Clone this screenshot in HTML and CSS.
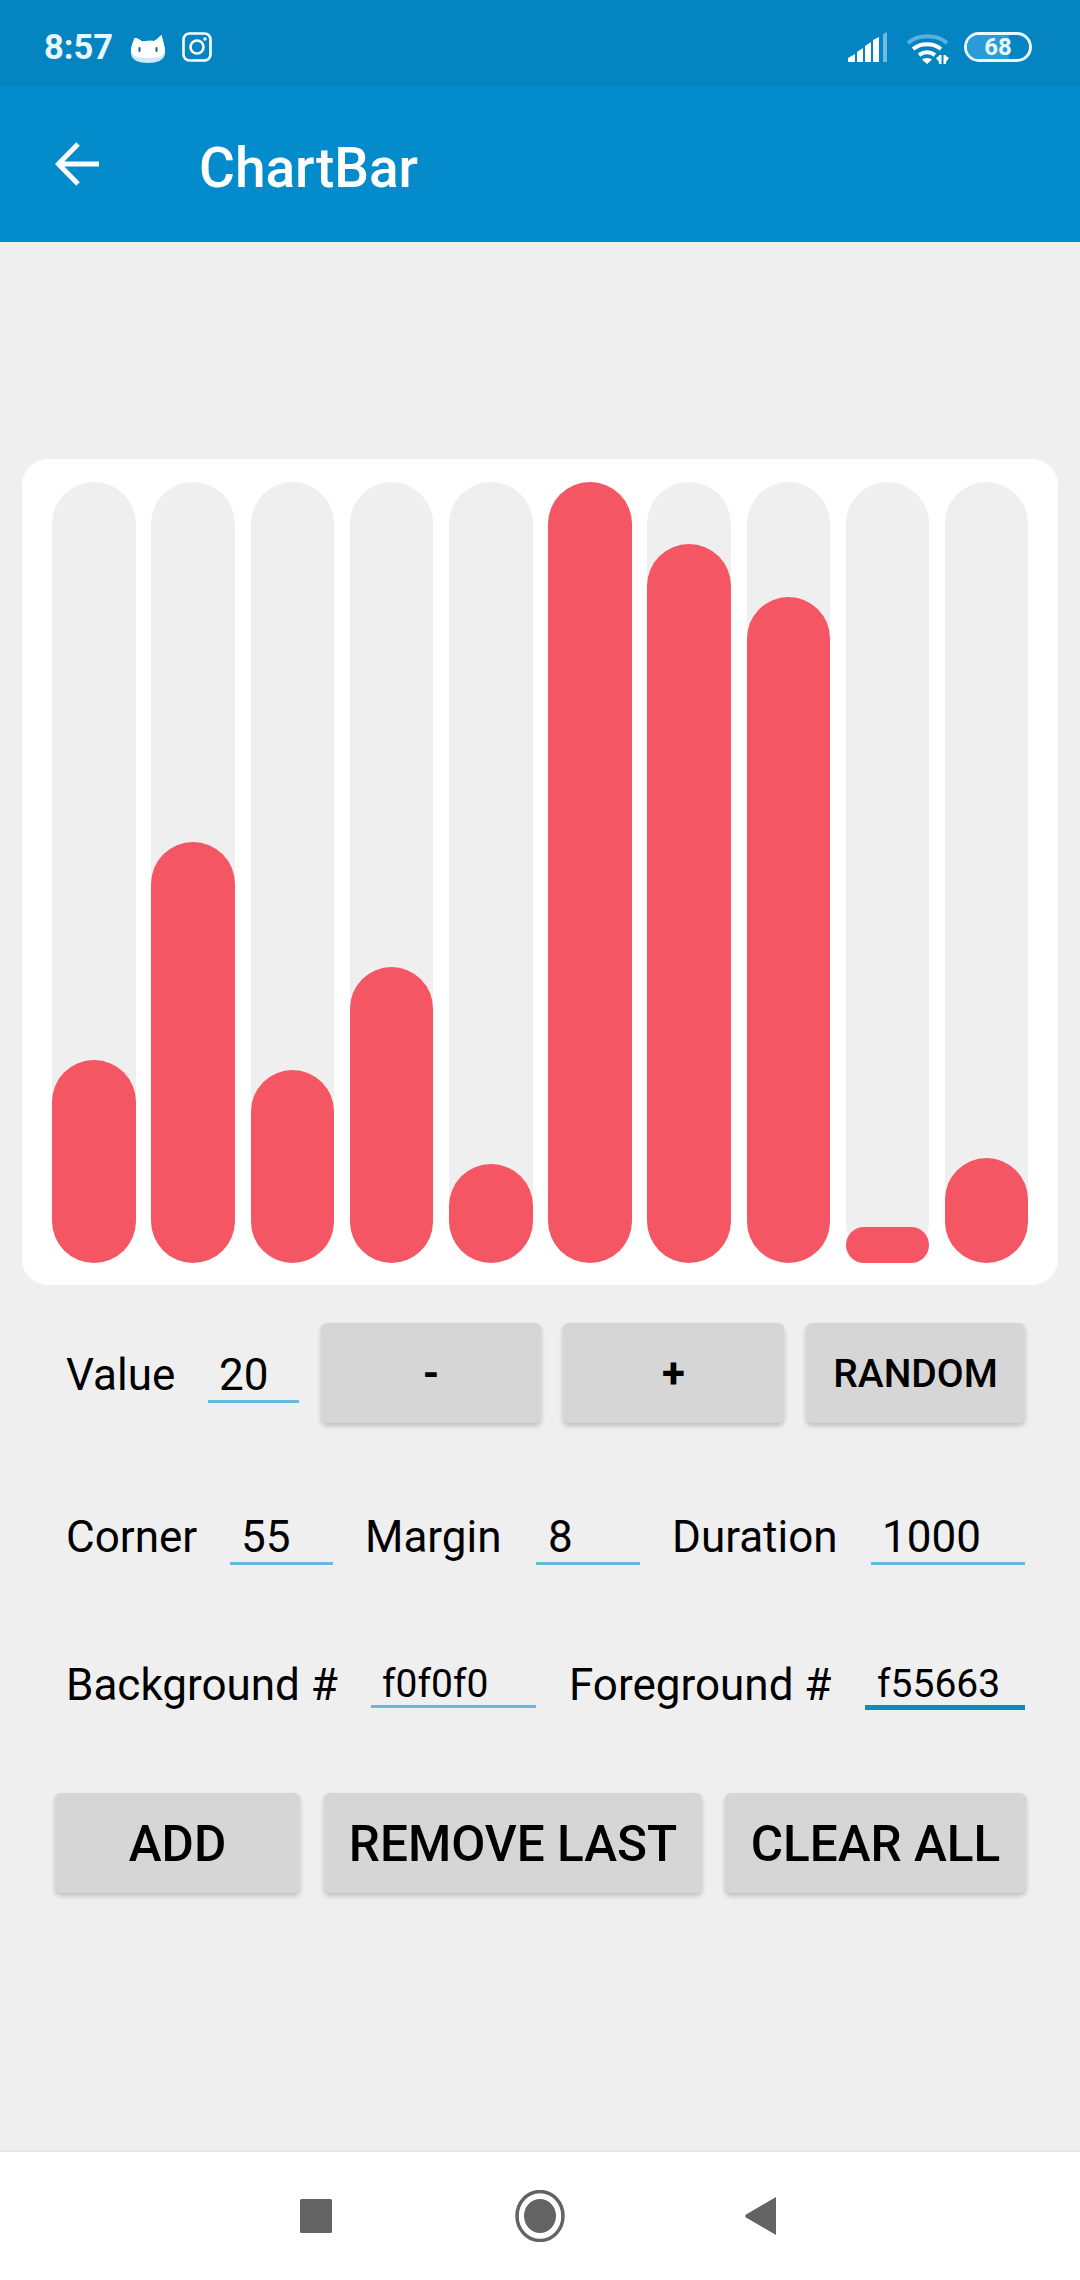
FILE: index.html
```html
<!DOCTYPE html>
<html lang="en">
<head>
<meta charset="utf-8">
<title>ChartBar</title>
<link rel="stylesheet" href="styles.css">
</head>
<body>
<div class="screen">
  <header class="status">
    <div class="status-left">
      <span class="time">8:57</span>
      <svg class="ic-cat" viewBox="0 0 36 30"><path fill="#cfe9f8" d="M1 19C1 12 3 9 4.500 4 8 4 10 6 12 7.500c4-1 8-1 12-.5 3-1.500 5-4 7.500-6C32.500 6 35 12 35 19c0 7-8 10-17 10S1 26 1 19z"/><path fill="#fff" d="M1 17C1 12 3 9 4.500 4 8 4 10 6 12 7.500c4-1 8-1 12-.5 3-1.500 5-4 7.500-6C32.500 6 35 12 35 17c0 5-8 7-17 7S1 22 1 17z"/><rect x="8.500" y="13" width="2" height="5" rx="1" fill="#1a5f85"/><rect x="25.500" y="13" width="2" height="5" rx="1" fill="#1a5f85"/></svg>
      <svg class="ic-insta" viewBox="0 0 30 30"><rect x="1.500" y="1.500" width="27" height="27" rx="6" fill="none" stroke="#fff" stroke-width="2.600"/><circle cx="15" cy="15" r="6.500" fill="none" stroke="#fff" stroke-width="2.600"/><circle cx="23" cy="7" r="1.700" fill="#fff"/></svg>
    </div>
    <div class="status-right">
      <svg class="ic-signal" viewBox="0 0 42 30"><path fill="#fff" d="M0 30v-4l7-4v8zM9 30V20l6-4v14zM17 30V14l6-4v20zM25 30V8l6-3v25z"/><path fill="#6fb9e2" d="M35 30V2l4-2v30z"/></svg>
      <svg class="ic-wifi" viewBox="0 0 44 32"><path fill="none" stroke="#5cb0e0" stroke-width="4" d="M2 11C12 2 31 2 41 11"/><path fill="none" stroke="#fff" stroke-width="4" d="M7 17c8-6.500 20-6.500 28 0"/><path fill="none" stroke="#fff" stroke-width="4" d="M13 23c5-3.500 11-3.500 16 0"/><path fill="#fff" d="M16 27.500c3-2 7-2 10 0L21 32zM33 23h2.500v9H33zM37.500 23H40v9h-2.500z"/><path fill="#fff" d="M30 26l3-2v6zM43 26l-3-2v6z"/></svg>
      <div class="battery"><span class="battery-level"></span><span class="battery-num">68</span></div>
    </div>
  </header>
  <div class="toolbar">
    <svg class="ic-back" viewBox="0 0 44 44"><path fill="none" stroke="#fff" stroke-width="5" d="M44 22H3.500M23 2L3.500 22 23 42"/></svg>
    <h1 class="title">ChartBar</h1>
  </div>
  <main class="content">
    <section class="chart">
      <div class="track"><div class="fill" style="height:26%"></div></div>
      <div class="track"><div class="fill" style="height:53.9%"></div></div>
      <div class="track"><div class="fill" style="height:24.7%"></div></div>
      <div class="track"><div class="fill" style="height:37.9%"></div></div>
      <div class="track"><div class="fill" style="height:12.7%"></div></div>
      <div class="track"><div class="fill" style="height:100%"></div></div>
      <div class="track"><div class="fill" style="height:92%"></div></div>
      <div class="track"><div class="fill" style="height:85.3%"></div></div>
      <div class="track"><div class="fill" style="height:4.6%"></div></div>
      <div class="track"><div class="fill" style="height:13.4%"></div></div>
    </section>

    <div class="row row-value">
      <span class="label lb-value">Value</span>
      <span class="field fd-value">20</span>
      <button class="btn btn-step btn-minus">-</button>
      <button class="btn btn-step">+</button>
      <button class="btn btn-random">RANDOM</button>
    </div>

    <div class="row row-params">
      <span class="label lb-corner">Corner</span>
      <span class="field fd-corner">55</span>
      <span class="label lb-margin">Margin</span>
      <span class="field fd-margin">8</span>
      <span class="label lb-duration">Duration</span>
      <span class="field fd-duration">1000</span>
    </div>

    <div class="row row-colors">
      <span class="label lb-bg">Background #</span>
      <span class="field field-sm fd-bg">f0f0f0</span>
      <span class="label lb-fg">Foreground #</span>
      <span class="field field-sm field-focus fd-fg">f55663</span>
    </div>

    <div class="row row-actions">
      <button class="btn btn-action btn-add">ADD</button>
      <button class="btn btn-action btn-remove">REMOVE LAST</button>
      <button class="btn btn-action btn-clear">CLEAR ALL</button>
    </div>
  </main>
  <nav class="navbar">
    <svg class="ic-nav" viewBox="0 0 32 34"><rect x="0" y="0" width="32" height="34" rx="1.500" fill="#636363"/></svg>
    <svg class="ic-nav-home" viewBox="0 0 50 52"><ellipse cx="25" cy="26" rx="23" ry="24.500" fill="none" stroke="#636363" stroke-width="3.500"/><ellipse cx="25" cy="26" rx="16" ry="17" fill="#636363"/></svg>
    <svg class="ic-nav-back" viewBox="0 0 31 38"><path fill="#636363" d="M31 0v38L1 20.500q-1.500-1.500 0-3z"/></svg>
  </nav>
</div>
</body>
</html>
```

FILE: styles.css
```css
* { box-sizing: border-box; }
html, body { margin: 0; padding: 0; }
body { font-family: Roboto, "Liberation Sans", sans-serif; color: #000; background: #efefef; }
.screen { width: 1080px; height: 2280px; display: flex; flex-direction: column; overflow: hidden; }

/* Status bar */
.status { height: 86px; flex: none; background: #0484c1; display: flex; justify-content: space-between; align-items: flex-start; padding: 32px 48px 0 44px; }
.status-left, .status-right { display: flex; align-items: flex-start; }
.time { font-size: 34.500px; font-weight: 700; line-height: 30px; color: #e8f6fd; width: 86px; }
.ic-cat { width: 36px; height: 30px; margin-top: 2px; }
.ic-insta { width: 30px; height: 30px; margin-left: 16px; }
.ic-signal { width: 42px; height: 30px; }
.ic-wifi { width: 44px; height: 32px; margin-left: 16px; }
.battery { position: relative; width: 68px; height: 30px; margin-left: 14px; border: 3px solid #eaf7fd; border-radius: 15px; overflow: hidden; display: flex; align-items: center; justify-content: center; }
.battery-level { position: absolute; left: 0; top: 0; bottom: 0; width: 68%; background: #2a9bd8; }
.battery-num { position: relative; font-size: 24px; font-weight: 700; color: #eaf7fd; line-height: 24px; }

/* Toolbar */
.toolbar { height: 156px; flex: none; background: #038bcb; display: flex; align-items: center; padding-left: 55px; }
.ic-back { width: 44px; height: 44px; }
.title { margin: 0 0 0 100px; padding-top: 8px; font-size: 55px; font-weight: 500; color: #fff; line-height: 60px; }

/* Content */
.content { flex: 1; background: #efefef; display: flex; flex-direction: column; }
.chart { margin: 217px 22px 0; height: 826px; padding: 23px 29.500px 22px 30.200px; background: #fff; border-radius: 26px; display: flex; gap: 15.600px; }
.track { flex: 1; background: #efefef; border-radius: 42px; display: flex; align-items: flex-end; }
.fill { width: 100%; background: #f55663; border-radius: 42px; }

.row { display: flex; }
.label { font-size: 44px; line-height: 50px; padding-bottom: 3px; flex: none; }
.field { font-size: 44px; line-height: 50px; flex: none; border-bottom: 3px solid #67b9de; }
.field-sm { font-size: 39px; line-height: 42px; }
.field-focus { border-bottom: 5px solid #0f8abb; }

.btn { font-family: inherit; color: #000; border: 0; padding: 0; background: #d6d6d6; border-radius: 6px; box-shadow: 0 3px 5px rgba(0, 0, 0, .2); font-weight: 500; flex: none; }

.row-value { margin-top: 38px; height: 100px; padding-left: 66px; align-items: center; }
.row-value .label, .row-value .field { margin-top: 7px; }
.lb-value { width: 142px; }
.fd-value { width: 91px; padding-left: 11px; margin-right: 22px; }
.btn-step { width: 221px; height: 100px; margin-right: 22px; font-size: 42px; font-weight: 700; }
.btn-minus { width: 220px; }
.btn-random { width: 219px; height: 100px; padding-top: 2px; font-size: 39px; }

.row-params { margin-top: 89px; padding-left: 66px; }
.lb-corner { width: 164px; }
.fd-corner { width: 103px; padding-left: 11px; margin-right: 32px; }
.lb-margin { width: 171px; }
.fd-margin { width: 104px; padding-left: 12px; margin-right: 32px; }
.lb-duration { width: 199px; }
.fd-duration { width: 154px; padding-left: 11px; }

.row-colors { margin-top: 95px; padding-left: 66px; align-items: flex-start; }
.row-colors .field { margin-top: 3px; }
.lb-bg { width: 305px; }
.fd-bg { width: 165px; padding-left: 11px; margin-right: 33px; }
.lb-fg { width: 296px; }
.fd-fg { width: 160px; padding-left: 12px; }

.row-actions { margin-top: 80px; padding-left: 55px; }
.btn-action { height: 100px; padding-top: 2px; font-size: 49.500px; }
.btn-add { width: 245px; margin-right: 24px; }
.btn-remove { width: 378px; margin-right: 23px; }
.btn-clear { width: 301px; }

/* Navigation bar */
.navbar { position: relative; height: 130px; flex: none; background: #fff; border-top: 2px solid #e6e6e6; display: flex; align-items: center; padding-left: 300px; }
.ic-nav { width: 32px; height: 34px; }
.ic-nav-home { width: 50px; height: 52px; margin-left: 183px; }
.ic-nav-back { width: 31px; height: 38px; margin-left: 180px; }
```
